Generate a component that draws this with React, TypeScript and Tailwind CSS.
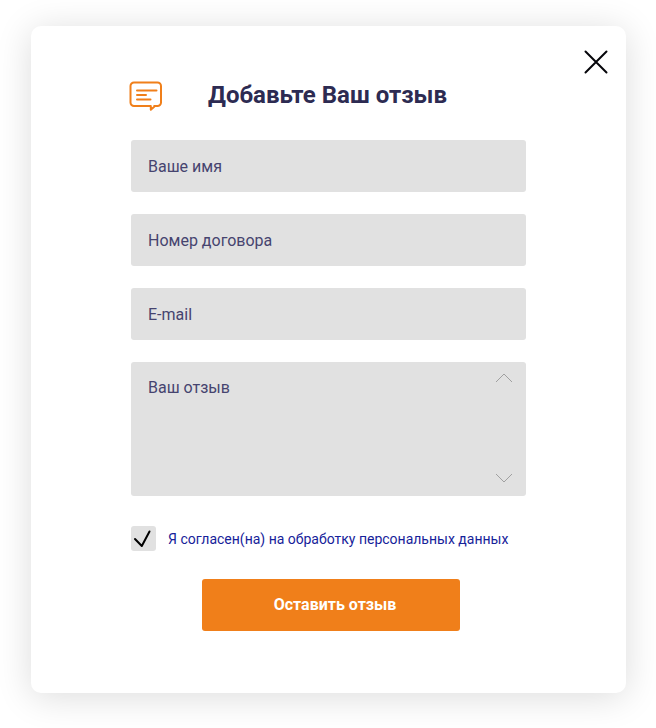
import { useState } from "react";

const fieldStyle =
  "block w-full rounded-[3px] bg-[#e1e1e1] px-[17px] text-base text-[#46446f] placeholder:text-[#46446f] placeholder:opacity-100 outline-none";

function CommentIcon() {
  return (
    <svg width="34" height="32" viewBox="0 -2 34 32" fill="none" stroke="#f07f1a" strokeWidth="2" strokeLinecap="round" strokeLinejoin="round" aria-hidden="true" className="-ml-0.5 shrink-0">
      <path d="M5 1.5H28.5A3.5 3.5 0 0 1 32 5V21.5A3.5 3.5 0 0 1 28.5 25H25.2V25.800L21.800 28.800V25H5A3.5 3.5 0 0 1 1.5 21.5V5A3.5 3.5 0 0 1 5 1.5Z" />
      <path d="M8 9.5H27.5M8 14H17M8 18.5H21.500" />
    </svg>
  );
}

function Chevron({ up = false }: { up?: boolean }) {
  return (
    <svg width="18" height="10" viewBox="0 0 18 10" fill="none" stroke="#a0a0a0" strokeWidth="1" aria-hidden="true">
      <path d={up ? "M1 9L9 1L17 9" : "M1 1L9 9L17 1"} />
    </svg>
  );
}

export default function App() {
  const [agreed, setAgreed] = useState(true);

  return (
    <main className="min-h-screen bg-white pt-[26px] pr-[30px] pb-[35px] pl-[31px] font-['Roboto',sans-serif]">
      <section className="relative rounded-[10px] bg-white px-[100px] pt-[52px] pb-[62px] shadow-[0_4px_36px_rgba(0,0,0,0.14)]">
        <button type="button" aria-label="Закрыть" className="absolute top-6 right-[18px]">
          <svg width="24" height="24" viewBox="0 0 24 24" fill="none" stroke="#05050a" strokeWidth="2" strokeLinecap="round">
            <path d="M1.5 1.5L22.5 22.5M22.5 1.5L1.5 22.5" />
          </svg>
        </button>

        <header className="flex items-center gap-[45px]">
          <CommentIcon />
          <h1 className="text-2xl leading-[34px] font-bold whitespace-nowrap text-[#2d2b52]">Добавьте Ваш отзыв</h1>
        </header>

        <form className="mt-7 flex flex-col" onSubmit={(e) => e.preventDefault()}>
          <div className="flex flex-col gap-[22px]">
            <input type="text" aria-label="Ваше имя" placeholder="Ваше имя" className={`${fieldStyle} h-[52px]`} />
            <input type="text" aria-label="Номер договора" placeholder="Номер договора" className={`${fieldStyle} h-[52px]`} />
            <input type="email" aria-label="E-mail" placeholder="E-mail" className={`${fieldStyle} h-[52px]`} />
            <div className="relative">
              <textarea aria-label="Ваш отзыв" placeholder="Ваш отзыв" className={`${fieldStyle} h-[134px] resize-none py-[14px]`} />
              <div className="pointer-events-none absolute top-[11px] right-[13px] bottom-[13px] flex flex-col justify-between">
                <Chevron up />
                <Chevron />
              </div>
            </div>
          </div>

          <label className="mt-[30px] flex items-center gap-3 text-sm text-[#16229a]">
            <span className="grid h-[25px] w-[25px] shrink-0">
              <input
                type="checkbox"
                checked={agreed}
                onChange={(e) => setAgreed(e.target.checked)}
                className="peer col-start-1 row-start-1 h-[25px] w-[25px] appearance-none rounded-[3px] bg-[#e1e1e1]"
              />
              <svg width="25" height="25" viewBox="0 0 25 25" fill="none" stroke="#000" strokeWidth="2" strokeLinecap="round" strokeLinejoin="round" className="pointer-events-none invisible col-start-1 row-start-1 peer-checked:visible" aria-hidden="true">
                <path d="M4 13L10.8 20L18.5 5.5" />
              </svg>
            </span>
            <span>Я согласен(на) на обработку персональных данных</span>
          </label>

          <button type="submit" className="mt-7 ml-[5px] h-[52px] w-[258px] self-center rounded-[3px] bg-[#f07f1a] pl-2 text-base font-bold text-white">
            Оставить отзыв
          </button>
        </form>
      </section>
    </main>
  );
}
